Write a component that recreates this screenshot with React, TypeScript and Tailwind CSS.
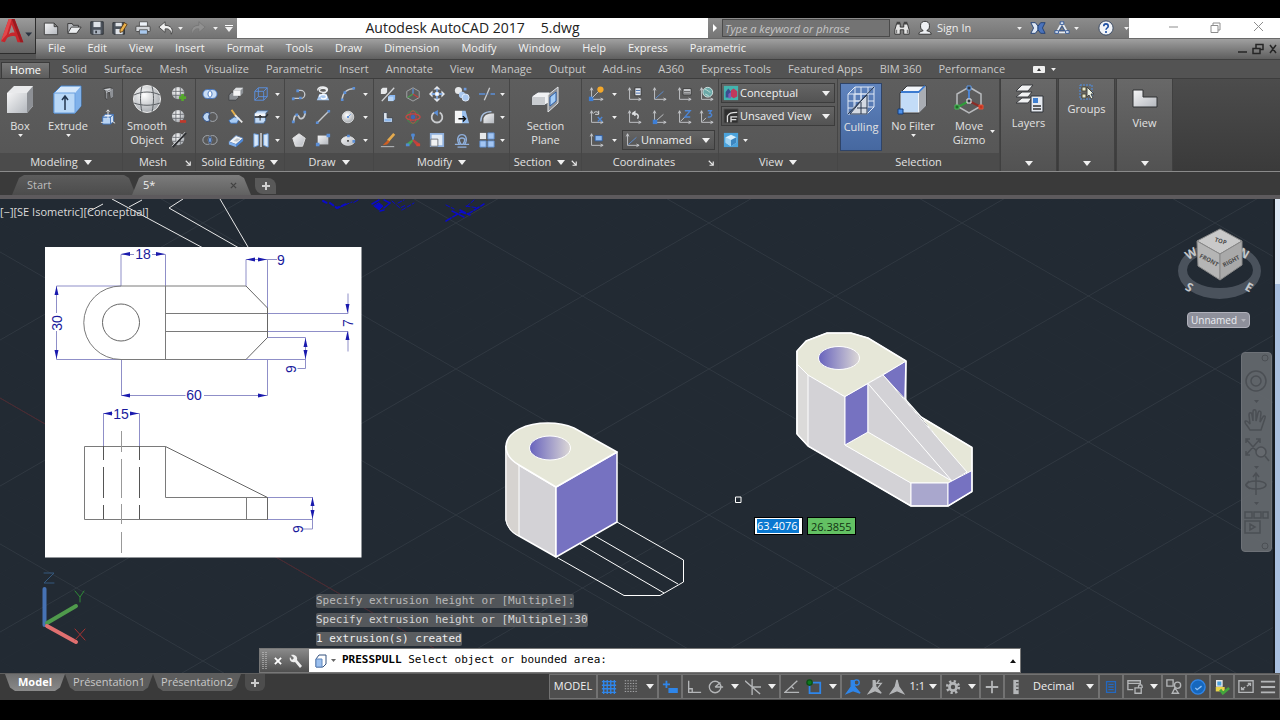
import React from 'react';

type Pt = [number, number];

const menus = ['File', 'Edit', 'View', 'Insert', 'Format', 'Tools', 'Draw', 'Dimension', 'Modify', 'Window', 'Help', 'Express', 'Parametric'];

const ribbonTabs = [
  'Solid', 'Surface', 'Mesh', 'Visualize', 'Parametric', 'Insert', 'Annotate', 'View', 'Manage', 'Output',
  'Add-ins', 'A360', 'Express Tools', 'Featured Apps', 'BIM 360', 'Performance',
];

/* ---------- small icons, all drawn in an 18x18 box ---------- */

const axes = <path d="M4 2v13h13M4 2l-1.500 3M4 2l1.500 3M17 15l-3-1.500M17 15l-3 1.500" stroke="#c9cbce" fill="none" />;
const globe = (
  <>
    <circle cx="8" cy="8" r="7" fill="url(#ball)" />
    <path d="M1.500 6h13M1.500 10.500h13M5.500 1.500v13M10.500 1.500v13" stroke="#6a6e73" fill="none" />
  </>
);

const icons: Record<string, React.ReactNode> = {
  newFile: <path d="M1.500 3.500h11l4 4v9h-15zM12.500 3.500v4h4" fill="url(#silver)" stroke="#3a3a3a" />,
  open: (
    <>
      <path d="M2 14V4h5l1 2h6v2" fill="#b9bcc0" stroke="#333" />
      <path d="M2 15l4-7h11l-5 7z" fill="#eceef0" stroke="#333" />
    </>
  ),
  save: (
    <>
      <path d="M2 2h14v14H3l-1-1z" fill="#4d545d" stroke="#2b2f35" />
      <path d="M5 2h8v6H5z" fill="#dfe3e8" />
      <path d="M5 11h8v5H5z" fill="#aab2bd" />
      <path d="M7 12h2v3H7z" fill="#3b4148" />
    </>
  ),
  saveAs: (
    <>
      <path d="M1 3h13v13H2l-1-1z" fill="#4d545d" stroke="#2b2f35" />
      <path d="M4 3h7v4H4zM4 10h8v6H4z" fill="#dfe3e8" />
      <path d="M9 11l5-8 3 2-5 8-3 1z" fill="#e9b04b" stroke="#5c3c14" />
    </>
  ),
  print: (
    <>
      <path d="M5 2h9v6H5z" fill="#eef3fa" stroke="#555" />
      <rect x="1" y="7" width="16" height="6" rx="1" fill="#d3d6da" stroke="#444" />
      <path d="M5 11h9v5H5z" fill="#a9c9ee" stroke="#555" />
    </>
  ),
  undo: <path d="M8 2L1 8l7 6v-4c4-.5 6 1 7 6C18 10 14 6 8 6z" fill="#f0f0f0" stroke="#444" />,
  redo: <path d="M10 2l7 6-7 6v-4c-4-.5-6 1-7 6C0 10 4 6 10 6z" fill="#909090" stroke="#777" />,
  binoculars: (
    <>
      <path d="M3 4h4v4h4V4h4l2 7v5h-6v-5H7v5H1v-5z" fill="#e6e6e6" stroke="#2c2c2c" />
      <path d="M3 2h4v3H3zM11 2h4v3h-4z" fill="#444" />
      <path d="M3 11v4M15 11v4" stroke="#555" />
    </>
  ),
  person: <path d="M2 16c0-3 3-3 5-4-3-2-3-3-3-6 0-6 10-6 10 0 0 3 0 4-3 6 2 1 5 1 5 4z" fill="#eef0f3" stroke="#2c2c2c" />,
  exchange: (
    <>
      <path d="M1 3h5l3 4v4l-3 4H1l3-6z" fill="#dfe8f5" stroke="#1f3f77" />
      <path d="M17 3h-5L9 7v4l3 4h5l-3-6z" fill="#4b73bb" stroke="#1f3f77" />
    </>
  ),
  triangle: (
    <>
      <path d="M9 3l6 11H3z" fill="none" stroke="#e6ecf5" strokeWidth="2" />
      <path d="M9 7l3 5H6z" fill="none" stroke="#2d5395" />
      <path d="M7 2h4v3H7zM1 12h4v3H1zM13 12h4v3h-4z" fill="#dfe8f5" stroke="#2d5395" />
    </>
  ),
  help: (
    <>
      <circle cx="9" cy="9" r="8" fill="#f1f4f8" stroke="#31435f" />
      <path d="M6.500 7c0-3.500 5-3.500 5 0 0 2-2.500 2-2.500 4M9 12.500v2" stroke="#1d4fa3" strokeWidth="1.800" fill="none" />
    </>
  ),
  presspullSmall: (
    <>
      <path d="M3 3l8-1 4 1v9l-3 2-1-7-3 1v7l-2-1V6z" fill="#cfd2d6" stroke="#333" />
      <path d="M3 3l5 3 7-3M8 6v9" stroke="#77797d" fill="none" />
      <path d="M11 6l4-3v9l-3 2z" fill="#8e9196" />
    </>
  ),
  liftBox: (
    <>
      <path d="M3 9h9v8H3z" fill="#b7d3f3" stroke="#3d6fb3" />
      <path d="M3 9l3-3h9l-3 3zM12 9l3-3v8l-3 3z" fill="#e8f1fb" stroke="#3d6fb3" />
      <path d="M9 11V1M7 3l2-2 2 2M1 15h3M14 14l3 2" stroke="#f1f1f1" fill="none" />
    </>
  ),
  meshMore: <>{globe}<path d="M13 9v8M9 13h8" stroke="#54a82b" strokeWidth="3" /></>,
  meshLess: <>{globe}<path d="M10 14h7" stroke="#c0392b" strokeWidth="3" /></>,
  meshRefine: <>{globe}<path d="M2 17L17 1" stroke="#2d2f32" strokeWidth="2" /><path d="M1 16L16 0" stroke="#c9cbce" /></>,
  union: (
    <>
      <rect x="1" y="4" width="16" height="10" rx="5" fill="#c9ddf5" stroke="#3c6fbc" />
      <path d="M9 5c-3 2-3 6 0 8 3-2 3-6 0-8z" fill="#fff" stroke="#3c6fbc" />
    </>
  ),
  subtract: (
    <>
      <circle cx="12" cy="9" r="5" fill="none" stroke="#aab0b8" />
      <path d="M9 5c-2 2-2 6 0 8a5 5 0 1 1 0-8z" fill="#bcd5f2" stroke="#24457f" />
    </>
  ),
  intersect: (
    <>
      <circle cx="6" cy="9" r="5" fill="none" stroke="#aab0b8" />
      <circle cx="12" cy="9" r="5" fill="none" stroke="#aab0b8" />
      <path d="M9 5c-2 2-2 6 0 8 2-2 2-6 0-8z" fill="#8db8ee" stroke="#24457f" />
    </>
  ),
  faces: (
    <>
      <path d="M1 10l3-3h8v6l-3 3H1z" fill="#8b8f94" stroke="#3f4144" />
      <path d="M6 5l3-3h8v6l-3 3H6z" fill="#8b8f94" />
      <path d="M6 5h8v6H6z" fill="#f4f5f6" />
      <path d="M6 5l3-3h8l-3 3z" fill="#dcdee0" />
    </>
  ),
  slice: (
    <>
      <path d="M1 13l6-4 6 1-3 6H3z" fill="#a8cbf3" stroke="#3d6fb3" />
      <path d="M4 1l5 7" stroke="#e4b04d" strokeWidth="2" fill="none" />
      <path d="M8 7l8 8" stroke="#e9e9e9" strokeWidth="2" />
    </>
  ),
  thicken: (
    <>
      <path d="M1 11l8-7 8 3-8 7z" fill="#f1f4f8" stroke="#5c7fb0" />
      <path d="M6 10l4-3 4 1-4 3z" fill="#c2c6cb" />
      <path d="M1 11l8 3v3l-8-3z" fill="#7fb0ee" />
      <path d="M9 14l8-7v3l-8 7z" fill="#4d86d4" />
    </>
  ),
  wireBox: <path d="M2 6h10v10H2zM6 2h10v10H6zM2 6l4-4M12 6l4-4M2 16l4-4M12 16l4-4" stroke="#5b93e6" fill="none" />,
  extractBox: (
    <>
      <path d="M2 5l3-3h12l-3 3v8l-2 3H2z" fill="#c3daf5" stroke="#4b6f9c" />
      <path d="M2 5h12v3H2z" fill="#f4f6f9" />
      <path d="M2 9h12l3-3" stroke="#2a2d31" fill="none" strokeWidth="1.500" />
      <path d="M8 13V7M6 9l2-2 2 2" stroke="#222" fill="none" />
    </>
  ),
  mirror3d: (
    <>
      <path d="M1 2l5 1v12l-5 2zM17 2l-5 1v12l5 2z" fill="#d8e8fa" stroke="#6ca2e6" />
      <path d="M9 1v16" stroke="#e8e8e8" strokeWidth="1.500" />
    </>
  ),
  polyline: (
    <>
      <path d="M2 14h9a4.500 4.500 0 0 0 0-9H7" stroke="#c6c9cd" strokeWidth="1.500" fill="none" />
      <path d="M1 13h3v3H1zM6 4h3v3H6zM9 12h3v3H9z" fill="#5b8fd8" />
    </>
  ),
  helix: (
    <>
      <path d="M2 16l3-7h8l3 7z" fill="#a8c8ef" />
      <path d="M3 5c0-5 11-5 11-1s-9 4-9 1 8-3 8 0-5 3-5 3" stroke="#eceef0" strokeWidth="1.500" fill="none" />
      <path d="M5 12c0-3 8-3 8 0s-6 3-6 1" stroke="#fff" strokeWidth="1.500" fill="none" />
    </>
  ),
  arc: (
    <>
      <path d="M2 16C3 8 8 3 16 3" stroke="#c6c9cd" strokeWidth="1.500" fill="none" />
      <path d="M1 14h3v3H1zM4 6h3v3H4zM14 1h3v3h-3z" fill="#5b8fd8" />
    </>
  ),
  spline: (
    <>
      <path d="M3 15c0-10 5-9 6-6s6 3 7-5" stroke="#c6c9cd" strokeWidth="2" fill="none" />
      <path d="M1 13h3v3H1zM5 5h3v3H5zM14 2h3v3h-3z" fill="#5b8fd8" />
    </>
  ),
  line: (
    <>
      <path d="M2 16L16 2" stroke="#c6c9cd" strokeWidth="1.500" />
      <path d="M1 14h3v3H1zM14 1h3v3h-3z" fill="#5b8fd8" />
    </>
  ),
  circle: (
    <>
      <circle cx="9" cy="9" r="6.500" fill="url(#ball)" stroke="#d9dbdd" />
      <path d="M9 9l3-3" stroke="#5b8fd8" />
      <path d="M8 8h2v2H8z" fill="#5b8fd8" />
    </>
  ),
  polygon: <path d="M9 2l7 5-3 9H5L2 7z" fill="url(#silver)" stroke="#e5e5e5" />,
  rectangle: (
    <>
      <path d="M3 4h12v10H3z" fill="url(#silver)" />
      <path d="M1 12h4v4H1zM13 2h4v4h-4z" fill="#5b8fd8" />
    </>
  ),
  ellipse: (
    <>
      <ellipse cx="9" cy="10" rx="7.500" ry="5" fill="url(#silver)" stroke="#dcdee0" />
      <path d="M8 9h2v2H8z" fill="#444" />
      <path d="M8 3h3v3H8zM14 9h3v3h-3z" fill="#5b8fd8" />
    </>
  ),
  convert: (
    <>
      <path d="M1 4l2-2h5v5L6 9H1z" fill="#e6e8ea" />
      <path d="M2 17L16 2" stroke="#d2d4d7" strokeWidth="1.500" />
      <path d="M9 12l2-2h6v5l-2 2H9z" fill="#8ab8f2" />
      <path d="M9 12h6v5H9z" fill="#b7d4f6" />
    </>
  ),
  presspull: (
    <>
      <path d="M4 4h4v6h6v5H4z" fill="#dfe6ef" stroke="#444c58" />
      <path d="M5 11h8v3H5z" fill="#8eb9ef" />
    </>
  ),
  brush: (
    <>
      <path d="M16 2l-7 8" stroke="#e5ab4e" strokeWidth="3" />
      <path d="M9 9l-6 6 5-1 3-3z" fill="#cf5f22" />
      <path d="M1 16.500h15" stroke="#c6c9cd" />
    </>
  ),
  gizmoMove: (
    <>
      <path d="M9 2l7 4v7l-7 4-7-4V6z" fill="none" stroke="#a8abae" />
      <path d="M9 9V3" stroke="#5b8fd8" strokeWidth="1.500" />
      <path d="M9 9l-6 4" stroke="#48a14d" strokeWidth="1.500" />
      <path d="M9 9l6 4" stroke="#bf4040" strokeWidth="1.500" />
    </>
  ),
  gizmoRotate: (
    <>
      <circle cx="9" cy="9" r="7" fill="none" stroke="#3d9a46" />
      <ellipse cx="9" cy="9" rx="8" ry="3.500" fill="none" stroke="#c64545" strokeWidth="1.500" />
      <ellipse cx="9" cy="9" rx="3.500" ry="7" fill="none" stroke="#c64545" />
      <circle cx="9" cy="9" r="2.500" fill="#3d67b5" />
    </>
  ),
  gizmoScale: (
    <>
      <path d="M9 9V2" stroke="#5b8fd8" strokeWidth="2" />
      <path d="M9 9l-7 5M4 15l5-6" stroke="#48a14d" strokeWidth="2" />
      <path d="M9 9l7 5M14 15l-5-6" stroke="#bf4040" strokeWidth="2" />
      <path d="M7 2h4v3H7zM1 13h4v3H1z" fill="#4f8ad6" />
      <path d="M13 13h4v3h-4z" fill="#d4452f" />
    </>
  ),
  move: (
    <>
      <path d="M9 0l4 4H5zM9 18l4-4H5zM0 9l4-4v8zM18 9l-4-4v8z" fill="#e7eaee" />
      <path d="M9 3v12M3 9h12" stroke="#7ba4dd" strokeWidth="2" />
      <path d="M7 7h4v4H7z" fill="#fff" />
    </>
  ),
  rotate: (
    <>
      <path d="M12 4a6 6 0 1 1-6 0" stroke="#c9cbce" strokeWidth="2" fill="none" />
      <path d="M10 1L5 4l5 4z" fill="#5b8fd8" />
    </>
  ),
  scale: (
    <>
      <path d="M2 2h14v14H2z" fill="#e4ecf6" stroke="#8fb0dd" strokeWidth="2" />
      <path d="M2 8h8v8H2z" fill="#f2f3f4" stroke="#6b7077" />
    </>
  ),
  copy: (
    <>
      <circle cx="5" cy="5" r="4" fill="#e5e7e9" />
      <circle cx="9" cy="10" r="3.500" fill="#a9c7ee" />
      <circle cx="13" cy="13" r="4" fill="#a9c7ee" stroke="#e5eefa" />
      <path d="M11 2h3v3h-3z" fill="#6c9add" />
    </>
  ),
  stretch: (
    <>
      <path d="M1 2h8v14H1z" fill="#f4f5f6" />
      <path d="M9 2h4l4 14H9z" fill="#9ac1f0" />
      <path d="M5 11h7M10 8l3 3-3 3" stroke="#111" fill="none" strokeWidth="1.500" />
    </>
  ),
  offset: (
    <path
      d="M1 14h5c-4-6-1-11 3-11s7 5 3 11h5M4 17h10M6 9c0-3 6-3 6 0 0 2-1 3-2 5H8c-1-2-2-3-2-5z"
      fill="none"
      stroke="#8fb0dd"
      strokeWidth="1.500"
    />
  ),
  trim: (
    <>
      <path d="M0 9h7M13 9h5" stroke="#5b8fd8" strokeWidth="1.500" />
      <path d="M6 16l6-14" stroke="#c9cbce" strokeWidth="1.500" />
      <path d="M8 9h4" stroke="#4d7fd0" strokeDasharray="1 1" />
    </>
  ),
  fillet: (
    <>
      <path d="M5 16v-5c1-4 4-6 12-6v11z" fill="url(#silver)" />
      <path d="M2 14C2 6 6 3 14 3" stroke="#a9c0e0" strokeWidth="1.500" fill="none" />
    </>
  ),
  array: (
    <>
      <path d="M1 1h7v7H1z" fill="#e6e8ea" />
      <path d="M10 1h7v7h-7zM1 10h7v7H1zM10 10h7v7h-7z" fill="#a3c5f2" stroke="#5f8dcc" />
    </>
  ),
  ucsNew: <>{axes}<path d="M1 12h5v5H1z" fill="#3e7fd6" /><path d="M5 13l8-8" stroke="#c9cbce" /><circle cx="14" cy="4" r="3.500" fill="#f4a82a" /></>,
  ucsPick: <>{axes}<path d="M10 2h7v9h-7z" fill="#e6e9ee" stroke="#333" /><path d="M11 5h5M11 8h5" stroke="#345fa5" /></>,
  ucs: <>{axes}<path d="M5 14l9-8" stroke="#5b8fd8" /></>,
  ucsNamed: <>{axes}<path d="M8 3h9v7H8z" fill="#dfe1e4" stroke="#333" /><path d="M9 6h7M9 8h7" stroke="#444" /></>,
  ucsWorld: <>{axes}<circle cx="11" cy="7" r="5.500" fill="#6aa9a8" stroke="#dce8e8" /><path d="M8 4c3 0 4 3 6 3M8 9l4 2" stroke="#cfe5dd" fill="none" /></>,
  ucsX: <>{axes}<path d="M6 5c2-3 5-2 6 0M12 2v4H8" stroke="#e2e4e6" fill="none" /><path d="M11 9l5 5M16 9l-5 5" stroke="#4d86d4" strokeWidth="1.500" /></>,
  ucsPrev: <>{axes}<path d="M7 5l3-2v5M7 6c6-2 8 1 6 5" stroke="#e2e4e6" strokeWidth="1.500" fill="none" /></>,
  ucsOrigin: <>{axes}<path d="M5 14l9-8" stroke="#c9cbce" /><path d="M2 12h5v5H2z" fill="#3e7fd6" /></>,
  ucsZ: <>{axes}<path d="M5 14l5-5" stroke="#c9cbce" /><path d="M10 2h6l-6 7h6" stroke="#4d86d4" strokeWidth="1.500" fill="none" /></>,
  ucs3: <>{axes}<path d="M5 14l4-4" stroke="#c9cbce" /><path d="M11 2h4l-2 3c4 0 3 5-2 4" stroke="#4d86d4" strokeWidth="1.500" fill="none" /></>,
  ucsView: <>{axes}<path d="M8 4h8v6H8z" fill="#8db9f0" stroke="#2f5da0" /></>,
  viewBox: (
    <>
      <path d="M1 1h16v16H1z" fill="#4ba3dc" />
      <path d="M3 6l6-3 6 3v6l-6 4-6-4z" fill="#d9effb" />
      <path d="M9 9l6-3v6l-6 4z" fill="#3c86c0" />
      <path d="M3 6l6 3v7l-6-4z" fill="#9fd2f2" />
    </>
  ),
  conceptual: (
    <>
      <path d="M1 1h16v16H1z" fill="#43b3ae" />
      <path d="M3 8l3-4 3 4v6H3z" fill="#3a4d8f" />
      <path d="M9 6l3-2 4 3v6l-4 2-3-2z" fill="#c0395c" />
      <path d="M6 10l3-2v7H6z" fill="#7d5cb8" />
    </>
  ),
  unsaved: (
    <>
      <path d="M1 1h16v16H1z" fill="#2f2f2f" stroke="#555" />
      <path d="M5 16V9c2-3 4-4 11-4M9 16v-6h7M9 13h6" stroke="#e0e0e0" strokeWidth="1.500" fill="none" />
    </>
  ),
};

const Icon = ({ name, size = 'h-[18px] w-[18px]' }: { name: string; size?: string }) => (
  <svg viewBox="0 0 18 18" className={`${size} shrink-0`} aria-hidden="true">
    {icons[name]}
  </svg>
);

const Caret = ({ small = false }: { small?: boolean }) => (
  <svg viewBox="0 0 8 5" className={small ? 'h-[3px] w-[5px] shrink-0' : 'h-[5px] w-2 shrink-0'} aria-hidden="true">
    <path d="M0 0h8L4 5z" fill="#f0f0f0" />
  </svg>
);

const Launcher = () => (
  <svg viewBox="0 0 8 8" className="h-[6px] w-[6px]" aria-hidden="true">
    <path d="M1 1l5 5M7 2v5H2" stroke="#e8e8e8" strokeWidth="1.500" fill="none" />
  </svg>
);

const IconButton = ({ name }: { name: string }) => (
  <button aria-label={name} className="flex h-[22px] items-center justify-center">
    {name === 'more' ? <Caret small /> : <Icon name={name} size="h-4 w-4" />}
  </button>
);

/* ---------- ribbon ---------- */

interface PanelProps {
  title: string;
  width: string;
  caret?: boolean;
  launcher?: boolean;
  children: React.ReactNode;
}

const Panel = ({ title, width, caret, launcher, children }: PanelProps) => (
  <section className={`${width} flex shrink-0 flex-col border-r border-[#464646] bg-linear-to-b from-[#5e5e5e] to-[#555]`}>
    <div className="flex flex-1 pt-1">{children}</div>
    <div className={`${launcher ? 'pr-3' : ''} relative flex h-[18px] items-center justify-center gap-[6px] bg-[#4b4b4b] whitespace-nowrap`}>
      <span>{title}</span>
      {caret && <Caret />}
      {launcher && (
        <span className="absolute right-1 bottom-[5px]">
          <Launcher />
        </span>
      )}
    </div>
  </section>
);

const BigButton = ({ label, width, more, active, children }: { label: string; width: string; more?: boolean; active?: boolean; children: React.ReactNode }) => (
  <button
    className={`${width} flex h-[68px] shrink-0 flex-col items-center text-center leading-[14px] ${
      active ? 'border border-[#2f4468] bg-linear-to-b from-[#5f83bd] to-[#4668a0]' : ''
    }`}
  >
    <svg viewBox="0 0 32 32" className="mb-1 h-8 w-8 shrink-0" aria-hidden="true">
      {children}
    </svg>
    <span>{label}</span>
    {more && (
      <span className="mt-px flex">
        <Caret small />
      </span>
    )}
  </button>
);

const CollapsedPanel = ({ label, short, children }: { label: string; short?: boolean; children: React.ReactNode }) => (
  <button className="mr-px flex w-[57px] shrink-0 flex-col items-center border-x border-[#404040] bg-linear-to-b from-[#686868] to-[#525252] pt-1">
    <svg viewBox={short ? '0 0 32 18' : '0 0 32 32'} className={short ? 'h-[18px] w-8' : 'h-8 w-8'} aria-hidden="true">
      {children}
    </svg>
    <span>{label}</span>
    <span className="mt-auto mb-[5px]">
      <Caret />
    </span>
  </button>
);

const Combo = ({ label, value, icon, width }: { label: string; value: string; icon: string; width: string }) => (
  <div className={`${width} relative flex h-5 items-center border border-[#3c3c3c] bg-linear-to-b from-[#656565] to-[#535353]`}>
    <span className="absolute left-px">
      <Icon name={icon} size="h-4 w-4" />
    </span>
    <select aria-label={label} className="w-full appearance-none bg-transparent pl-[18px] text-[#f0f0f0] outline-none">
      <option>{value}</option>
    </select>
    <span className="pointer-events-none absolute right-1">
      <Caret />
    </span>
  </div>
);

const solidEditing = ['union', 'faces', 'wireBox', 'more', 'subtract', 'slice', 'extractBox', 'more', 'intersect', 'thicken', 'mirror3d', 'more'];
const drawTools = ['polyline', 'helix', 'arc', 'more', 'spline', 'line', 'circle', 'more', 'polygon', 'rectangle', 'ellipse', 'more'];
const modifyTools = [
  ['convert', 'gizmoMove', 'move', 'copy', 'trim', 'more'],
  ['presspull', 'gizmoRotate', 'rotate', 'stretch', 'fillet', 'more'],
  ['brush', 'gizmoScale', 'scale', 'offset', 'array', 'more'],
].flat();
const coordTools = ['ucsNew', 'more', 'ucsPick', 'ucs', 'ucsNamed', 'ucsWorld', 'ucsX', 'more', 'ucsPrev', 'ucsOrigin', 'ucsZ', 'ucs3', 'ucsView', 'more'];

const Ribbon = () => (
  <div className="flex h-[94px] shrink-0 overflow-hidden border-t border-b border-t-[#3d3d3d] border-b-[#8a8a8a] bg-linear-to-b from-[#4c4c4c] to-[#3a3a3a] text-[11px] text-[#e2e2e2]">
    <Panel title="Modeling" width="w-[123px]" caret>
      <BigButton label="Box" width="w-10" more>
        <path d="M3 10l7-7h19v20l-6 7H3z" fill="#e9eaec" />
        <path d="M3 10h20v20H3z" fill="url(#silver)" />
        <path d="M23 10l6-7v20l-6 7z" fill="#8d9095" />
      </BigButton>
      <BigButton label="Extrude" width="w-[56px]" more>
        <path d="M2 10l7-7h20v20l-6 7H2z" fill="#d6e8fb" stroke="#4583cc" />
        <path d="M23 10l6-7v20l-6 7z" fill="#7fb1ea" />
        <path d="M2 10h21v20H2z" fill="#b9d8f7" stroke="#6aa0df" />
        <path d="M13 27V14M10 17l3-4 3 4" stroke="#23364f" strokeWidth="1.500" fill="none" />
      </BigButton>
      <div className="flex flex-col gap-px pl-1">
        <IconButton name="presspullSmall" />
        <IconButton name="liftBox" />
      </div>
    </Panel>
    <Panel title="Mesh" width="w-[73px]" launcher>
      <BigButton label="Smooth Object" width="w-12">
        <circle cx="16" cy="16" r="13.500" fill="url(#ball)" stroke="#ededed" />
        <path d="M3 12c8-4 18-4 26 0M3 20c8 3 18 3 26 0M11 3c-2 8-2 17 0 26M21 3c2 8 2 17 0 26" stroke="#5d6165" fill="none" />
      </BigButton>
      <div className="flex flex-col gap-px">
        <IconButton name="meshMore" />
        <IconButton name="meshLess" />
        <IconButton name="meshRefine" />
      </div>
    </Panel>
    <Panel title="Solid Editing" width="w-[89px]" caret>
      <div className="grid auto-rows-[22px] grid-cols-[24px_28px_22px_10px] gap-y-px pl-[2px]">
        {solidEditing.map((n, i) => <IconButton key={i} name={n} />)}
      </div>
    </Panel>
    <Panel title="Draw" width="w-[89px]" caret>
      <div className="grid auto-rows-[22px] grid-cols-[24px_24px_26px_8px] gap-y-px pl-[2px]">
        {drawTools.map((n, i) => <IconButton key={i} name={n} />)}
      </div>
    </Panel>
    <Panel title="Modify" width="w-[136px]" caret>
      <div className="grid auto-rows-[22px] grid-cols-[24px_26px_22px_28px_22px_8px] gap-y-px pl-[2px]">
        {modifyTools.map((n, i) => <IconButton key={i} name={n} />)}
      </div>
    </Panel>
    <Panel title="Section" width="w-[72px]" caret launcher>
      <div className="flex flex-1 justify-center">
        <BigButton label="Section Plane" width="w-12">
          <path d="M2 13l6-4h12v10l-5 3H2z" fill="#f0f1f3" stroke="#55585c" />
          <path d="M2 14h13v8H2z" fill="#c9ccd0" />
          <path d="M18 12l10-8v16l-10 9z" fill="#8d9197" stroke="#e4e6e8" />
          <path d="M20 14l6-5v9l-6 5z" fill="#a5cdf6" stroke="#2c5fa8" />
        </BigButton>
      </div>
    </Panel>
    <Panel title="Coordinates" width="w-[137px]" launcher>
      <div className="grid auto-rows-[22px] grid-cols-[22px_15px_24px_26px_24px_20px] gap-y-px pl-[3px]">
        {coordTools.map((n, i) => <IconButton key={i} name={n} />)}
        <div className="col-span-4 flex items-center">
          <Combo label="Named UCS" value="Unnamed" icon="ucs" width="w-[93px]" />
        </div>
      </div>
    </Panel>
    <Panel title="View" width="w-[119px]" caret>
      <div className="flex flex-1 flex-col gap-[3px] px-[2px]">
        <Combo label="Visual style" value="Conceptual" icon="conceptual" width="w-[114px]" />
        <Combo label="Saved view" value="Unsaved View" icon="unsaved" width="w-[114px]" />
        <div className="flex gap-1 pl-[2px]">
          <IconButton name="viewBox" />
          <IconButton name="more" />
        </div>
      </div>
    </Panel>
    <Panel title="Selection" width="w-[162px]">
      <div className="flex flex-1 pl-[2px]">
        <BigButton label="Culling" width="w-[42px]" active>
          <path d="M3 10h19v20H3zM10 3h19v20H10zM3 10l7-7M22 10l7-7M22 30l7-7M3 30l7-7M9 10v20M16 10v20M3 17h19M3 24h19M16 3v20M23 3v20M10 10h19M10 17h19" stroke="#dfe8f5" fill="none" />
          <path d="M16 17l6-6v19H5z" fill="#d4dae3" stroke="#2d3c55" />
          <path d="M3 30L29 3M12 24h10M16 18v12" stroke="#27354b" />
        </BigButton>
        <BigButton label="No Filter" width="w-[62px]" more>
          <path d="M3 10l7-7h19v20l-7 7H3z" fill="#f2f5f9" stroke="#35373a" />
          <path d="M4 10h17v19H4z" fill="#c3dcf7" />
          <path d="M4 9h18l6-6" stroke="#3c7bd0" strokeWidth="2" fill="none" />
          <path d="M22 10l7-7v20l-7 7z" fill="#a9adb3" />
          <path d="M1 26h5v5H1z" fill="#4d90e8" stroke="#123f80" />
        </BigButton>
        <BigButton label="Move Gizmo" width="w-[50px]">
          <path d="M16 4l12 7v12l-12 7-12-7V11z" fill="none" stroke="#b8babd" strokeWidth="1.500" />
          <path d="M16 18V6" stroke="#4b82d0" strokeWidth="2" />
          <path d="M16 18L5 24" stroke="#2f9c3a" strokeWidth="2" />
          <path d="M16 18l12 6" stroke="#8a2c26" strokeWidth="2" />
          <path d="M14 3h4v4h-4z" fill="#33383f" stroke="#5f9bea" />
          <path d="M14 16h4v4h-4z" fill="#33383f" stroke="#f0f0f0" />
          <path d="M2 22h4v4H2z" fill="#1f6b28" stroke="#49b956" />
          <path d="M26 22h4v4h-4z" fill="#c4351f" stroke="#e0523a" />
        </BigButton>
        <span className="-ml-1 pt-[47px]">
          <Caret small />
        </span>
      </div>
    </Panel>
    <CollapsedPanel label="Layers">
      <path d="M3 8l6-6h11l-5 6zM3 14l6-5h10l-4 5zM3 20l6-5h10l-4 5z" fill="#f1f2f3" stroke="#3b3d40" />
      <path d="M18 13h12v16H18z" fill="#e6eaf0" stroke="#2f3338" />
      <path d="M20 15h5v5h-5z" fill="#3f7fd0" />
      <path d="M20 23h8M20 26h8" stroke="#333" strokeWidth="1.500" />
    </CollapsedPanel>
    <CollapsedPanel label="Groups" short>
      <path d="M9 2h12v14H9z" fill="none" stroke="#4d90e8" strokeDasharray="2 1" />
      <path d="M11 4h4v4h-4zM11 11h4v4h-4z" fill="#e8e6c8" stroke="#4a4a3a" />
      <path d="M16 4l7 7h-3l2 4-2 1-2-4-2 2z" fill="#e9f0e2" stroke="#444" />
    </CollapsedPanel>
    <CollapsedPanel label="View">
      <path d="M4 7h10v7h14v10H4z" fill="url(#silver)" stroke="#2f3133" />
    </CollapsedPanel>
  </div>
);

/* ---------- title, menu and tab rows ---------- */

const Header = () => (
  <header className="flex shrink-0 bg-[#555] text-[11px]">
    <button aria-label="Application menu" className="flex h-9 w-9 shrink-0 items-center border-r border-b border-[#2d2d2d] bg-linear-to-b from-[#9b9b9b] to-[#636363]">
      <svg viewBox="0 0 36 36" className="h-full w-full" aria-hidden="true">
        <path d="M1 24L9 1h6l9 24h-6l-2-6c-4-1-7 0-9 2l-2 4z" fill="#c8262c" />
        <path d="M9 1h3L7 17l-6 7z" fill="#e2474b" />
        <path d="M12 7l3 8c-3 0-4 0-6 2z" fill="#9a8c8c" />
        <path d="M12 1h3l9 24h-3z" fill="#9b1a20" />
        <path d="M26 15h7l-3.500 4z" fill="#2b3340" />
      </svg>
    </button>
    <div className="min-w-0 flex-1">
      <div className="flex h-5 items-stretch">
        <div className="flex w-[201px] shrink-0 items-center gap-px bg-linear-to-b from-[#8f8f8f] to-[#727272] pl-1">
          {['newFile', 'open', 'save', 'saveAs', 'print', 'undo'].map((n) => (
            <button key={n} aria-label={n} className="flex w-[22px] justify-center">
              <Icon name={n} size="h-4 w-4" />
            </button>
          ))}
          <Caret small />
          <button aria-label="redo" className="flex w-7 justify-center">
            <Icon name="redo" size="h-4 w-4" />
          </button>
          <Caret small />
          <span className="ml-[6px] flex flex-col items-center gap-px">
            <span className="h-px w-2 bg-white" />
            <Caret />
          </span>
        </div>
        <h1 className="flex flex-1 items-center justify-center gap-4 bg-white text-[14px] leading-5 whitespace-nowrap text-[#222]">
          <span>Autodesk AutoCAD 2017</span>
          <span>5.dwg</span>
        </h1>
        <div className="flex w-[421px] shrink-0 items-center bg-linear-to-b from-[#8c8c8c] to-[#757575] text-[#ededed]">
          <svg viewBox="0 0 14 20" className="h-5 w-[14px]" aria-hidden="true">
            <path d="M5 6l4 4-4 4z" fill="#fff" />
          </svg>
          <input
            aria-label="Search"
            placeholder="Type a keyword or phrase"
            className="h-[18px] w-[168px] border border-[#4a4a4a] bg-[#737373] px-[2px] text-[11px] italic outline-none placeholder:text-[#c6c6c6]"
          />
          <button aria-label="Find" className="flex w-6 justify-center"><Icon name="binoculars" size="h-4 w-4" /></button>
          <button className="flex items-center gap-1 pl-[3px]">
            <Icon name="person" size="h-4 w-4" />
            Sign In
          </button>
          <span className="ml-auto flex w-[112px] items-center">
            <Caret small />
            <button aria-label="Exchange" className="flex w-8 justify-center"><Icon name="exchange" size="h-4 w-4" /></button>
            <button aria-label="A360" className="flex w-4 justify-center"><Icon name="triangle" size="h-4 w-4" /></button>
            <span className="ml-1 flex"><Caret small /></span>
            <button aria-label="Help" className="ml-[10px] flex w-9 justify-center"><Icon name="help" size="h-4 w-4" /></button>
            <Caret small />
          </span>
        </div>
        <div className="flex w-[151px] shrink-0 items-center justify-between bg-white pr-[14px] pl-10">
          <svg viewBox="0 0 96 12" className="h-3 w-[96px]" aria-hidden="true">
            <path d="M0 5h9M42 3.500h7v7h-7zM44 3V1h7v7h-2M85 0l9 9M94 0l-9 9" stroke="#8d8d8d" fill="none" />
          </svg>
        </div>
      </div>
      <nav className="flex h-[21px] items-center gap-[22px] border-t border-[#6a6a6a] bg-linear-to-b from-[#a0a0a0] to-[#5f5f5f] pb-px pl-3 text-[#f2f2f2]">
        {menus.map((m) => <a key={m} href="#menu">{m}</a>)}
        <svg viewBox="0 0 42 12" className="ml-auto h-3 w-[42px] shrink-0" aria-hidden="true">
          <path d="M0 9h9M15 5.500h7v5h-7zM18 5V1.500h7v5h-3M32 2l6 8M38 2l-6 8" stroke="#262626" strokeWidth="1.500" fill="none" />
        </svg>
      </nav>
    </div>
  </header>
);

const TabRow = () => (
  <nav className="flex h-[19px] shrink-0 items-stretch border-t border-[#404040] bg-[#535353] text-[11px] text-[#c9c9c9]">
    <a href="#Home" className="mt-[2px] ml-px flex w-[49px] items-center justify-center border border-b-0 border-[#3b3b3b] bg-linear-to-b from-[#777] to-[#5c5c5c] text-white">Home</a>
    <div className="flex items-center gap-[17px] pl-3 whitespace-nowrap">
      {ribbonTabs.map((t) => <a key={t} href="#tab">{t}</a>)}
    </div>
    <div className="flex items-center gap-[6px] pl-[28px]">
      <svg viewBox="0 0 12 7" className="h-[7px] w-3" aria-hidden="true">
        <rect width="12" height="7" rx="1" fill="#f0f0f0" />
        <path d="M4 5l2-3 2 3z" fill="#333" />
      </svg>
      <Caret small />
    </div>
  </nav>
);

const fileTab = '[clip-path:polygon(0_100%,7px_15%,12px_0,calc(100%_-_12px)_0,calc(100%_-_7px)_15%,100%_100%)]';
const layoutTab = '[clip-path:polygon(0_0,5px_80%,10px_100%,calc(100%_-_10px)_100%,calc(100%_-_5px)_80%,100%_0)]';

const FileTabs = () => (
  <div className="flex h-[27px] shrink-0 items-end border-b-4 border-[#5d5a5d] bg-[#3a3a3a] pl-3 text-[11px] text-[#bdbdbd]">
    <button className={`${fileTab} flex h-5 w-[124px] items-center bg-linear-to-b from-[#5c5c5c] to-[#4c4c4c] pl-[15px]`}>Start</button>
    <button className={`${fileTab} -ml-1 flex h-5 w-[119px] items-center justify-between bg-linear-to-b from-[#7c7c7c] to-[#616161] pr-[14px] pl-[11px] text-[#efefef]`}>
      5*
      <svg viewBox="0 0 8 8" className="h-[7px] w-[7px]" aria-hidden="true">
        <path d="M1 1l6 6M7 1L1 7" stroke="#424242" strokeWidth="1.500" />
      </svg>
    </button>
    <button aria-label="New drawing" className="mb-px ml-1 flex h-4 w-[21px] items-center justify-center rounded-tr-lg rounded-bl-lg bg-[#595959]">
      <svg viewBox="0 0 8 8" className="h-2 w-2" aria-hidden="true">
        <path d="M4 0v8M0 4h8" stroke="#d0d0d0" strokeWidth="2" />
      </svg>
    </button>
  </div>
);

/* ---------- drawing area ---------- */

// isometric grid lines, step is the distance between them on the vertical axis
const gridLines = (step: number, from: number, to: number) => {
  const lines: string[] = [];
  for (let k = from; k <= to; k++) {
    const down = 515 - 962 * 0.577 + step * k;
    const up = 515 + 962 * 0.577 + step * k;
    lines.push(`M0 ${down}L1280 ${down + 1280 * 0.577}M0 ${up}L1280 ${up - 1280 * 0.577}`);
  }
  return lines.join('');
};

const arrow = ([x, y]: Pt, dir: 'l' | 'r' | 'u' | 'd') => {
  const tip = `M${x} ${y}`;
  if (dir === 'l') return `${tip}l9 -2v4z`;
  if (dir === 'r') return `${tip}l-9 -2v4z`;
  if (dir === 'u') return `${tip}l-2 9h4z`;
  return `${tip}l-2 -9h4z`;
};

const arrowheads = [
  arrow([121, 254], 'l'), arrow([165, 254], 'r'), arrow([246, 259.500], 'l'), arrow([267, 259.500], 'r'),
  arrow([56.500, 286], 'u'), arrow([56.500, 359], 'd'), arrow([347.500, 313], 'd'), arrow([347.500, 331], 'u'),
  arrow([305.500, 338], 'u'), arrow([305.500, 359], 'd'), arrow([121, 395.500], 'l'), arrow([267, 395.500], 'r'),
  arrow([103, 413.500], 'l'), arrow([139, 413.500], 'r'), arrow([312.500, 497], 'u'), arrow([312.500, 519], 'd'),
].join('');

const DimensionSheet = () => (
  <g>
    <path d="M45 247h316.500v310.500H45z" fill="#fff" />
    <path
      d="M121 286V254.500h13M152 254.500h13.500V286M246 286v-26.500h31M267.500 259v49M121 286H56.500v27M56.500 331v28.500H121M267 313.500h81v-20M267 331.500h81v20M267 337.500h38.500v31h-8M246 359.500h60M121.500 359v36.500h64M204 395.500h63.500V359M103.500 446v-32.500h9M130 413.500h9.500V446M267 497.500h46M267 519.500h46M312.500 497v32h-10"
      fill="none"
      stroke="#8f8fc8"
    />
    <path
      d="M246 286H121a37 36.500 0 0 0 0 73.500h125M165.500 286v73.500M165 313.500h102M165 331.500h102M84.500 446.500h81v51h102v22h-183zM246.500 497v22"
      fill="none"
      stroke="#7a7a7a"
    />
    <path d="M246 286l21.500 22v29.500L246 359.500M165.500 446.500l102 51v22" fill="none" stroke="#666" />
    <circle cx="121" cy="322.500" r="18.500" fill="none" stroke="#666" />
    <path d="M103.500 446v14M103.500 467v31M103.500 505v14M139.500 446v14M139.500 467v31M139.500 505v14" stroke="#555" />
    <path d="M121.500 431v21M121.500 459v39M121.500 504v20M121.500 532v21" stroke="#999" />
    <path d={arrowheads} fill="#1a1aae" />
    <g fill="#1a1a9c" fontFamily="'Liberation Sans', Arial, sans-serif" fontSize="14" textAnchor="middle">
      <text x="143" y="259">18</text>
      <text x="281" y="265">9</text>
      <text x="194" y="400">60</text>
      <text x="121" y="419">15</text>
      <text transform="translate(62 323) rotate(-90)">30</text>
      <text transform="translate(353 323) rotate(-90)">7</text>
      <text transform="translate(296 369) rotate(-90)">9</text>
      <text transform="translate(303 529) rotate(-90)">9</text>
    </g>
  </g>
);

const Block = () => (
  <g stroke="#fff" strokeWidth="1.500" strokeLinejoin="round">
    <path d="M617 522l66.500 38v22L660 595.500h-36L558 558M595 536l83 48M580 544l84 49" fill="none" strokeWidth="1" />
    <path d="M506 446v74c1 6 5 12 13 16l37 21v-70l-37-22z" fill="#d3d2d6" />
    <path d="M506 446v74c1 6 5 12 13 16v-71c-8-5-13-10-13-19z" fill="#d6d3d0" strokeWidth="1" />
    <path d="M556 487l61-35v70l-61 35z" fill="#7672c1" />
    <path d="M617 452l-61 35-37-22c-9-5-13-12-13-19 1-15 21-23 42-23 9 0 19 2 26 5z" fill="#e6e7d8" />
    <ellipse cx="550" cy="448" rx="20.500" ry="12" fill="url(#hole)" strokeWidth="1" />
  </g>
);

const Bracket = () => (
  <g stroke="#fff" strokeWidth="1" strokeLinejoin="round">
    <path d="M921 417l51 30.500v24l-6 2z" fill="#e6e7d8" />
    <path d="M883 375l23-14v39z" fill="#7672c1" />
    <path d="M797 351v83l11 12 103 60v-23l-66-38v-48l-37-22z" fill="#d3d2d6" />
    <path d="M797 364v70l11 12v-71z" fill="#dbdad9" />
    <path d="M845 445l23-13 84 49-4 2h-37z" fill="#e6e7d8" />
    <path d="M845 396.500l23-13V432l-23 13z" fill="#7672c1" />
    <path d="M868 383.500V432l84 49z" fill="#d3d2d6" />
    <path d="M868 383.500l15-8.500 84 97-15 9z" fill="#d3d2d6" />
    <path d="M911 483h37v23h-37z" fill="#a9a7cd" />
    <path d="M948 483l24-12.500v21L948 506z" fill="#7672c1" />
    <path d="M906 361l-61 35.500L808 375l-11-11v-13l9-10 21-8h24l17 5z" fill="#e6e7d8" />
    <ellipse cx="839" cy="358" rx="20.500" ry="11.500" fill="url(#hole)" />
    <path d="M797 351v83l11 12 103 60h37l24-14.500v-44L921 417l-16-18 1-38-38-23-17-5h-24l-21 8z" fill="none" strokeWidth="1.500" />
  </g>
);

const ViewCube = () => (
  <g>
    <path
      fillRule="evenodd"
      d="M1178 271a41.500 28 0 1 0 83 0a41.500 28 0 1 0-83 0M1187 270a33 18 0 1 0 66 0a33 18 0 1 0-66 0"
      fill="#4a525c"
    />
    <g fontFamily="'Open Sans', sans-serif" fontWeight="700" textAnchor="middle" fill="#c4c7ca" fontSize="12">
      <text transform="translate(1193 257) rotate(-30)">W</text>
      <text transform="translate(1242 257) rotate(30)">N</text>
      <text transform="translate(1187 291) rotate(30)">S</text>
      <text transform="translate(1247 291) rotate(30)">E</text>
    </g>
    <path d="M1197 241l23-12 22 12-22 13z" fill="#c9c9c9" stroke="#888" />
    <path d="M1197 241l23 13v26l-22-14z" fill="#b5b5b5" stroke="#888" />
    <path d="M1242 241l-22 13v26l22-15z" fill="#a9a9a9" stroke="#888" />
    <g fontFamily="'Open Sans', sans-serif" fontWeight="700" textAnchor="middle" fill="#4b4b4b" fontSize="6">
      <text transform="translate(1220 243) rotate(18)">TOP</text>
      <text transform="translate(1208 262) rotate(28)">FRONT</text>
      <text transform="translate(1232 263) rotate(-28)">RIGHT</text>
    </g>
  </g>
);

const Scene = () => (
  <svg viewBox="0 199 1280 474" preserveAspectRatio="xMinYMin slice" className="absolute inset-0 h-full w-full">
    <defs>
      <linearGradient id="hole" x1="0" x2="1" y1="0" y2="0">
        <stop offset="0" stopColor="#6762bd" />
        <stop offset="1" stopColor="#dcd8d6" />
      </linearGradient>
    </defs>
    <path d={gridLines(29.200, -30, 30)} stroke="#242c35" fill="none" />
    <path d={gridLines(146, -8, 8)} stroke="#303841" fill="none" />
    <path d="M0 398l477 275" stroke="#4f2930" />
    <path d="M112 199l93 50M142 200l-13 7M88 212l15-8M183 199l-14 9 70 40M220 199l28 48" stroke="#e8e8e8" fill="none" />
    <g stroke="#0a0ac8" fill="none" strokeLinecap="round">
      <path d="M323 201l6 3M330 203l7 5 9-4" strokeWidth="2" strokeDasharray="4 3" />
      <path d="M338 208l14-6M358 200l-5 3" strokeDasharray="5 2" />
      <path d="M374 206l5 4 4-4-4-3z" fill="#0a0ac8" />
      <path d="M372 204l7-4M384 208l6-5-6-3M380 211l4-1" strokeWidth="1.500" />
      <path d="M392 201l8 7 6-3M402 210l12-7M398 203l6-3" strokeDasharray="4 2" />
      <path d="M446 221l15-9 9 3M452 211l12 6M460 210l8 4 16-10" strokeWidth="1.500" strokeDasharray="6 2" />
      <path d="M446 205l8 4M466 206l12 2M474 200l-8 7" strokeDasharray="4 2" />
    </g>
    <DimensionSheet />
    <Block />
    <Bracket />
    <path d="M735.500 497h5.500v5.500h-5.500z" fill="none" stroke="#fff" />
    <ViewCube />
    <g fill="none" strokeLinecap="round">
      <path d="M44.500 625v-36" stroke="#4672b4" strokeWidth="4" />
      <path d="M47 623l29-17" stroke="#4f9a4c" strokeWidth="4" />
      <path d="M47 626l29 16" stroke="#e07070" strokeWidth="4" />
      <path d="M44 573h10l-10 10h10" stroke="#34597f" />
      <path d="M75 591l5 6 4-6M80 597v5" stroke="#2f8a36" />
      <path d="M75 629l10 11M85 629l-10 11" stroke="#a83232" />
    </g>
  </svg>
);

const NavBar = () => (
  <aside className="absolute top-[153px] right-2 w-[31px] rounded border border-[#6d7177] bg-[#666a6f]/90">
    <svg viewBox="1 0 29 198" className="block w-full" fill="none" stroke="#4b4f54" strokeWidth="1.500" aria-hidden="true">
      <circle cx="24" cy="5" r="3" strokeWidth="1" />
      <circle cx="15" cy="28" r="10" />
      <circle cx="15" cy="28" r="5" />
      <path d="M13 47h5l-2.500 3zM13 113h5l-2.500 3zM13 149h5l-2.500 3z" fill="#4b4f54" stroke="none" />
      <path d="M9 77c-2-4-5-6-5-8s3-1 5 2l-1-9c0-3 3-3 3 0l1 6V59c0-3 3-3 3 0v9l2-8c1-3 3-2 3 0l-1 9 3-5c1-2 3-1 2 1l-4 12z" />
      <path d="M5 86l14 16M19 86L5 102M5 90v-4h4M15 86h4v4M5 98v4h4" />
      <circle cx="20" cy="99" r="5" fill="#65696e" />
      <path d="M24 103l4 5" />
      <ellipse cx="15" cy="132" rx="10" ry="4" />
      <path d="M15 120v22M12 124l3-4 3 4M8 128l-3 4 4 4" />
      <path d="M4 159h7v6H4zM13 159h7v6h-7zM22 159h5v6h-5zM4 168h15v12H4zM9 171v6l5-3z" />
      <circle cx="24" cy="193" r="3" strokeWidth="1" />
    </svg>
  </aside>
);

const CommandLine = () => (
  <div className="absolute bottom-0 left-1/2 w-[762px] -translate-x-1/2 font-['DejaVu_Sans_Mono',monospace] text-[11px]">
    <div className="mb-[2px] flex flex-col items-start gap-[5px] pl-[57px] leading-[14px] text-[#f0f0f0]">
      <p className="rounded-xs bg-[#515559] text-[#b9b9b9]">Specify extrusion height or [Multiple]:</p>
      <p className="rounded-xs bg-[#55585c] text-[#d6d6d6]">Specify extrusion height or [Multiple]:30</p>
      <p className="rounded-xs bg-[#5a5d60]">1 extrusion(s) created</p>
    </div>
    <div className="flex h-[25px] border border-[#777] bg-white">
      <div className="flex w-[49px] items-center gap-[7px] bg-linear-to-b from-[#8a8a8a] to-[#4f4f4f] pl-[2px]">
        <svg viewBox="0 0 5 17" className="h-[17px] w-[5px]" aria-hidden="true">
          <path d="M1 0v17M4 0v17" stroke="#d0d0d0" strokeDasharray="1 1" />
        </svg>
        <button aria-label="Close">
          <svg viewBox="0 0 9 9" className="h-2 w-2"><path d="M1 1l7 7M8 1L1 8" stroke="#fff" strokeWidth="2" /></svg>
        </button>
        <button aria-label="Customize">
          <svg viewBox="0 0 14 14" className="h-[14px] w-[14px]">
            <path d="M2 1l3 3-2 2-2-3c-1 3 1 6 5 5l5 6 2-2-5-6c1-3-2-6-6-5z" fill="#eee" />
          </svg>
        </button>
      </div>
      <div className="flex flex-1 items-center gap-[5px] pr-1 pl-[6px] text-black">
        <svg viewBox="0 0 22 14" className="h-[14px] w-[22px]" aria-hidden="true">
          <path d="M1 5l3-4h7v9l-3 3H1z" fill="#fff" stroke="#33507d" />
          <path d="M1 5h6v8H1z" fill="#9cc0ee" stroke="#5f86bd" />
          <path d="M16 5h5l-2.500 3z" fill="#666" />
        </svg>
        <label htmlFor="command" className="whitespace-nowrap"><b>PRESSPULL</b> Select object or bounded area:</label>
        <input id="command" className="min-w-0 flex-1 bg-transparent outline-none" />
        <svg viewBox="0 0 8 5" className="h-1 w-[6px]" aria-hidden="true"><path d="M0 5h8L4 0z" fill="#111" /></svg>
      </div>
    </div>
  </div>
);

const DrawingArea = () => (
  <main className="relative min-h-0 flex-1 overflow-hidden bg-[#222a33] text-[11px]">
    <Scene />
    <p className="absolute top-[6px] left-0 leading-[14px] text-[#dcdcdc]">[−][SE Isometric][Conceptual]</p>
    <button className="absolute top-[113px] right-[30px] flex h-4 w-[63px] items-center justify-between rounded border border-[#b0b1bb] bg-[#8e909b] px-[3px] text-[10px] text-[#eceef2]">
      Unnamed
      <span className="flex opacity-40"><Caret small /></span>
    </button>
    <NavBar />
    <div className="absolute top-[318px] left-[754px] flex gap-1 leading-[14px]">
      <span className="flex h-[18px] w-[49px] items-center border border-black bg-white pl-[2px]">
        <input aria-label="X" defaultValue="63.4076" className="h-[14px] w-[42px] bg-[#0a78d0] text-white outline-none" />
      </span>
      <input aria-label="Y" defaultValue="26.3855" className="h-[18px] w-[49px] border border-black bg-[#63c163] px-[3px] text-[#123312] outline-none" />
    </div>
    <CommandLine />
    <div className="absolute inset-y-0 right-0 flex w-[7px] flex-col border-l-2 border-[#151a20] bg-[#a9c0e0]">
      <div className="h-[85px] bg-[#dce7f3]" />
    </div>
  </main>
);

/* ---------- status bar ---------- */

const Group = ({ children }: { children: React.ReactNode }) => (
  <div className="flex h-[25px] shrink-0 items-center border border-[#727272]">{children}</div>
);

const Status = ({ label, children }: { label: string; children: React.ReactNode }) => (
  <button aria-label={label} className="flex w-[22px] justify-center">
    <svg viewBox="0 0 18 18" className="h-4 w-4" fill="none" stroke="#b4b6b8" strokeWidth="1.500">{children}</svg>
  </button>
);

const Drop = () => (
  <button aria-label="Options" className="flex w-[15px] justify-center"><Caret /></button>
);

const StatusBar = () => (
  <footer className="flex h-[27px] shrink-0 justify-between border-t border-[#5e5e5e] bg-[#3a3a3a] text-[11px] text-[#c8c8c8]">
    <div className="flex h-[17px] pl-[5px]">
      <button className={`${layoutTab} flex w-[60px] items-center justify-center bg-linear-to-b from-[#6f6f6f] to-[#8a8a8a] font-bold text-white`}>Model</button>
      <button className={`${layoutTab} flex w-[88px] items-center justify-center bg-[#5d5d5d]`}>Présentation1</button>
      <button className={`${layoutTab} flex w-[88px] items-center justify-center bg-[#5d5d5d]`}>Présentation2</button>
      <button aria-label="New layout" className="ml-1 flex w-5 items-center justify-center rounded-b-md bg-[#4d4d4d]">
        <svg viewBox="0 0 8 8" className="h-2 w-2"><path d="M4 0v8M0 4h8" stroke="#ccc" strokeWidth="2" /></svg>
      </button>
    </div>
    <div className="flex shrink-0 bg-[#4e4e4e] text-[#f0f0f0]">
      <Group><button className="w-[46px] text-center text-[11px]">MODEL</button></Group>
      <Group>
        <Status label="Grid"><path d="M3 1v16M7 1v16M11 1v16M15 1v16M1 3h16M1 7h16M1 11h16M1 15h16" stroke="#2f86ea" /></Status>
        <Status label="Snap"><path d="M2 2h15M2 5h15M2 8h15M2 11h15M2 14h15" strokeDasharray="1.500 1.500" strokeWidth="1" /></Status>
        <Drop />
      </Group>
      <Group>
        <Status label="Dynamic input"><path d="M5 2v8M1 6h8" stroke="#2f86ea" strokeWidth="2" /><path d="M8 11h9v4H8z" fill="#2f86ea" stroke="#2f86ea" /></Status>
      </Group>
      <Group>
        <Status label="Ortho"><path d="M3 2v13h14M3 11h4v4" /></Status>
        <Status label="Polar"><circle cx="8" cy="9" r="6.500" /><path d="M8 9h9M8 9l6-5" /></Status>
        <Drop />
        <Status label="Isodraft"><path d="M8 0v18M0 2l17 15M8 9h10" /></Status>
        <Drop />
      </Group>
      <Group>
        <Status label="Object tracking"><path d="M15 2L1 15h16M8 8l3 3" /></Status>
        <Status label="Object snap"><path d="M4 4h12v12H4z" stroke="#2f86ea" strokeWidth="2" /><circle cx="4" cy="4" r="3" fill="#0c7a1c" stroke="#0b4f14" /></Status>
        <Drop />
      </Group>
      <Group>
        <Status label="Annotation visibility"><path d="M7 2h3l1 7 6 7-8-3-7 3 5-7z" fill="#2f86ea" stroke="#2f86ea" /><circle cx="13" cy="4" r="3" stroke="#2f86ea" /></Status>
        <Status label="Auto scale"><path d="M7 2h2l1 7 6 7-7-3-7 3 5-7z" fill="#b4b6b8" /><path d="M14 1l-3 4h5l-4 5" /></Status>
        <Status label="Annotation scale"><path d="M9 1l2 8 5 7-7-3-7 3 5-7z" fill="#b4b6b8" /></Status>
        <span className="w-[17px] text-right">1:1</span>
        <Drop />
      </Group>
      <Group>
        <Status label="Workspace"><circle cx="9" cy="9" r="4" strokeWidth="3" /><circle cx="9" cy="9" r="6.500" strokeWidth="3" strokeDasharray="2.500 2.600" /></Status>
        <Drop />
      </Group>
      <Group>
        <Status label="Annotation monitor"><path d="M9 2v14M2 9h14" strokeWidth="2" /></Status>
      </Group>
      <Group>
        <Status label="Units icon"><path d="M6 1h6v16H6z" fill="#b4b6b8" stroke="none" /><path d="M9 4h3M9 8h3M9 12h3" stroke="#555" /></Status>
        <div className="relative flex items-center">
          <select aria-label="Units" className="w-[71px] appearance-none bg-transparent pl-[6px] outline-none"><option>Decimal</option></select>
          <span className="pointer-events-none absolute right-1"><Caret /></span>
        </div>
      </Group>
      <Group>
        <Status label="Quick properties"><path d="M4 3h10v12H4zM6 6h6M6 9h6M6 12h6" stroke="#2368c0" strokeWidth="1.500" /></Status>
      </Group>
      <Group>
        <Status label="Lock UI"><path d="M7 12H1V2h14v4M1 5h14M9 10h7v6H9z" /><path d="M13 10V8c0-2 4-2 4 0v2" /></Status>
        <Drop />
      </Group>
      <Group>
        <Status label="Isolate objects"><path d="M1 1h7v7H1zM7 16l3-6 4 6z" /><circle cx="13" cy="7" r="3.500" /></Status>
      </Group>
      <Group>
        <Status label="Hardware acceleration"><circle cx="9" cy="9" r="8" fill="#1667bd" stroke="#2f86ea" /><path d="M6 10l2 2 5-4" stroke="#8ec0f4" /></Status>
      </Group>
      <Group>
        <Status label="Trusted DWG"><path d="M3 2h6v6H3z" fill="#4aa0dc" stroke="#e8e8e8" /><path d="M2 9h10v5H2z" fill="#e8d34a" stroke="none" /><path d="M7 12l3 4 7-6" stroke="#43a63c" strokeWidth="3" /></Status>
      </Group>
      <Group>
        <Status label="Clean screen"><path d="M1 2h16v13H1zM10 8l4-3M11 5h3v3M8 9l-4 3M4 9v3h3" /></Status>
        <Status label="Customization"><path d="M1 3h16M1 9h16M1 15h16" strokeWidth="2" /></Status>
      </Group>
    </div>
  </footer>
);

const App: React.FC = () => (
  <div className="flex h-screen flex-col overflow-hidden bg-black pt-[18px] pb-5 font-['Open_Sans','Noto_Sans',sans-serif]">
    <svg className="absolute h-0 w-0" aria-hidden="true">
      <defs>
        <linearGradient id="silver" x1="0" x2="1" y1="0" y2="1">
          <stop offset="0" stopColor="#f5f5f6" />
          <stop offset="1" stopColor="#b4b8be" />
        </linearGradient>
        <radialGradient id="ball" cx=".4" cy=".35" r=".7">
          <stop offset="0" stopColor="#ffffff" />
          <stop offset="1" stopColor="#a3a7ac" />
        </radialGradient>
      </defs>
    </svg>
    <Header />
    <TabRow />
    <Ribbon />
    <FileTabs />
    <DrawingArea />
    <StatusBar />
  </div>
);

export default App;
